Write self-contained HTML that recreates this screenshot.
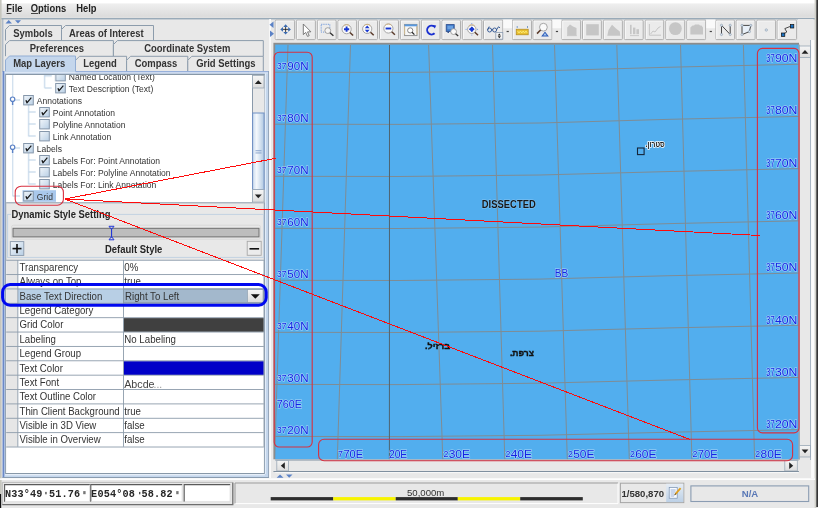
<!DOCTYPE html>
<html><head><meta charset="utf-8"><style>
html,body{margin:0;padding:0;width:818px;height:508px;overflow:hidden;background:#e8e8e8;}
svg{display:block;will-change:transform;}
</style></head><body>
<svg width="818" height="508" viewBox="0 0 818 508">
<rect x="0" y="0" width="818" height="508" fill="#e8e8e8"/>
<defs><linearGradient id="mb" x1="0" y1="0" x2="0" y2="1"><stop offset="0" stop-color="#efefef"/><stop offset="0.25" stop-color="#e9e9e9"/><stop offset="0.6" stop-color="#e2e2e2"/><stop offset="0.85" stop-color="#dcdcdc"/><stop offset="1" stop-color="#e2e2e2"/></linearGradient><linearGradient id="cb" x1="0" y1="0" x2="1" y2="1"><stop offset="0" stop-color="#f2f6fa"/><stop offset="1" stop-color="#b8cfe5"/></linearGradient><linearGradient id="thumb" x1="0" y1="0" x2="1" y2="0"><stop offset="0" stop-color="#c9daee"/><stop offset="0.35" stop-color="#f4f8fc"/><stop offset="1" stop-color="#b0c8e2"/></linearGradient><linearGradient id="btn" x1="0" y1="0" x2="0" y2="1"><stop offset="0" stop-color="#f6f6f6"/><stop offset="1" stop-color="#dcdcdc"/></linearGradient></defs>
<rect x="0" y="0" width="818" height="3.7" fill="#ffffff"/>
<rect x="0" y="3.7" width="818" height="14.6" fill="url(#mb)"/>
<rect x="0" y="18.3" width="815" height="1" fill="#7890a4"/>
<text x="6.3" y="11.9" font-family="Liberation Sans" font-size="10.2" font-weight="bold" fill="#222" transform="matrix(0.92,0,0,1,0.504,0)" >File</text>
<text x="30.7" y="11.9" font-family="Liberation Sans" font-size="10.2" font-weight="bold" fill="#222" transform="matrix(0.92,0,0,1,2.456,0)" >Options</text>
<text x="76.2" y="11.9" font-family="Liberation Sans" font-size="10.2" font-weight="bold" fill="#222" transform="matrix(0.92,0,0,1,6.096,0)" >Help</text>
<rect x="6.5" y="13" width="5" height="0.9" fill="#333"/>
<rect x="31" y="13" width="7" height="0.9" fill="#333"/>
<rect x="0" y="0" width="1.6" height="494" fill="#c6c6be"/>
<rect x="0" y="494" width="1.2" height="14" fill="#111"/>
<path d="M5.5 23.5 L8.7 20 L12 23.5Z" fill="#5b82c6"/>
<path d="M15 20.3 L21 20.3 L18 23.5Z" fill="#5b82c6"/>
<rect x="2.3" y="19" width="1" height="53" fill="#9aaabb"/>
<path d="M5.5 40.5 L5.5 29.5 L9.5 25.5 L61.5 25.5 L61.5 40.5 Z" fill="#e8e8e8"/>
<path d="M5.5 40.5 L5.5 29.5 L9.5 25.5 L61.5 25.5 L61.5 40.5" fill="none" stroke="#8c9cac" stroke-width="1"/>
<text x="13.2" y="36.7" font-family="Liberation Sans" font-size="10.2" font-weight="bold" fill="#333333" transform="matrix(0.93,0,0,1,0.924,0)" >Symbols</text>
<path d="M61.5 40.5 L61.5 29.5 L65.5 25.5 L153.5 25.5 L153.5 40.5 Z" fill="#e8e8e8"/>
<path d="M61.5 40.5 L61.5 29.5 L65.5 25.5 L153.5 25.5 L153.5 40.5" fill="none" stroke="#8c9cac" stroke-width="1"/>
<text x="69.0" y="36.7" font-family="Liberation Sans" font-size="10.2" font-weight="bold" fill="#333333" transform="matrix(0.93,0,0,1,4.830,0)" >Areas of Interest</text>
<path d="M5.5 56.2 L5.5 44.6 L9.5 40.6 L113.4 40.6 L113.4 56.2 Z" fill="#e8e8e8"/>
<path d="M5.5 56.2 L5.5 44.6 L9.5 40.6 L113.4 40.6 L113.4 56.2" fill="none" stroke="#8c9cac" stroke-width="1"/>
<text x="29.8" y="52.1" font-family="Liberation Sans" font-size="10.2" font-weight="bold" fill="#333333" transform="matrix(0.93,0,0,1,2.086,0)" >Preferences</text>
<path d="M113.4 56.2 L113.4 44.6 L117.4 40.6 L263.3 40.6 L263.3 56.2 Z" fill="#e8e8e8"/>
<path d="M113.4 56.2 L113.4 44.6 L117.4 40.6 L263.3 40.6 L263.3 56.2" fill="none" stroke="#8c9cac" stroke-width="1"/>
<text x="144.2" y="52.1" font-family="Liberation Sans" font-size="10.2" font-weight="bold" fill="#333333" transform="matrix(0.93,0,0,1,10.094,0)" >Coordinate System</text>
<path d="M75.5 71.5 L75.5 60.3 L79.5 56.3 L126.6 56.3 L126.6 71.5 Z" fill="#e8e8e8"/>
<path d="M75.5 71.5 L75.5 60.3 L79.5 56.3 L126.6 56.3 L126.6 71.5" fill="none" stroke="#8c9cac" stroke-width="1"/>
<text x="83.2" y="66.9" font-family="Liberation Sans" font-size="10.2" font-weight="bold" fill="#333333" transform="matrix(0.93,0,0,1,5.824,0)" >Legend</text>
<path d="M126.6 71.5 L126.6 60.3 L130.6 56.3 L187.8 56.3 L187.8 71.5 Z" fill="#e8e8e8"/>
<path d="M126.6 71.5 L126.6 60.3 L130.6 56.3 L187.8 56.3 L187.8 71.5" fill="none" stroke="#8c9cac" stroke-width="1"/>
<text x="134.7" y="66.9" font-family="Liberation Sans" font-size="10.2" font-weight="bold" fill="#333333" transform="matrix(0.93,0,0,1,9.429,0)" >Compass</text>
<path d="M187.8 71.5 L187.8 60.3 L191.8 56.3 L263.3 56.3 L263.3 71.5 Z" fill="#e8e8e8"/>
<path d="M187.8 71.5 L187.8 60.3 L191.8 56.3 L263.3 56.3 L263.3 71.5" fill="none" stroke="#8c9cac" stroke-width="1"/>
<text x="196.2" y="66.9" font-family="Liberation Sans" font-size="10.2" font-weight="bold" fill="#333333" transform="matrix(0.93,0,0,1,13.734,0)" >Grid Settings</text>
<path d="M5.5 72 L5.5 60.0 L9.5 56.0 L75.5 56.0 L75.5 72 Z" fill="#c4d6ec"/>
<path d="M5.5 72 L5.5 60.0 L9.5 56.0 L75.5 56.0 L75.5 72" fill="none" stroke="#93aed4" stroke-width="1"/>
<text x="13.2" y="66.9" font-family="Liberation Sans" font-size="10.2" font-weight="bold" fill="#333333" transform="matrix(0.93,0,0,1,0.924,0)" >Map Layers</text>
<rect x="2.6" y="71.2" width="266.4" height="406.8" fill="#c4d6ec"/>
<rect x="4.3" y="72.2" width="263.9" height="1.2" fill="#e2ecf8"/>
<rect x="264.8" y="73.4" width="1.2" height="400.6" fill="#e2ecf8"/>
<rect x="5.2" y="474" width="259.6" height="1.4" fill="#e6eef8"/>
<rect x="75.5" y="71.2" width="193.5" height="1" fill="#8aa6d8"/>
<rect x="2.6" y="71.1" width="1.7" height="406.9" fill="#6a88c8"/>
<rect x="268.2" y="71.2" width="0.9" height="406.8" fill="#8a9cb0"/>
<rect x="2.6" y="477" width="266.5" height="1" fill="#8a9cb0"/>
<rect x="5.2" y="73.8" width="259.6" height="400.2" fill="#8898a8"/>
<rect x="6.2" y="75" width="257.6" height="398" fill="#e8e8e8"/>
<rect x="6.2" y="75" width="246" height="127.5" fill="#ffffff"/>
<rect x="6.2" y="202.3" width="257.6" height="1" fill="#8e9cac"/>
<svg x="5.8" y="75.2" width="246.5" height="127.2" overflow="hidden"><g transform="translate(-5.8,-75.2)">
<rect x="12.1" y="75" width="1" height="121.5" fill="#b8cfe5"/>
<rect x="44.1" y="75" width="1" height="13" fill="#b8cfe5"/>
<rect x="28.1" y="104.5" width="1" height="32" fill="#b8cfe5"/>
<rect x="28.1" y="152.5" width="1" height="32" fill="#b8cfe5"/>
<rect x="44.7" y="75.5" width="7" height="1" fill="#b8cfe5"/>
<rect x="55.7" y="71.5" width="9.6" height="9.4" fill="url(#cb)" stroke="#8597ab" stroke-width="1"/>
<text x="68.8" y="79.9" font-family="Liberation Sans" font-size="9.3" fill="#333333" transform="matrix(0.92,0,0,1,5.504,0)" >Named Location (Text)</text>
<rect x="44.7" y="87.5" width="7" height="1" fill="#b8cfe5"/>
<rect x="55.7" y="83.5" width="9.6" height="9.4" fill="url(#cb)" stroke="#8597ab" stroke-width="1"/>
<path d="M57.300000000000004 88.4 L58.5 87.9 L59.300000000000004 89.5 L62.900000000000006 85.3 L63.800000000000004 86.1 L59.2 91.5 L58.6 91.5 Z" fill="#151515"/>
<text x="68.8" y="91.9" font-family="Liberation Sans" font-size="9.3" fill="#333333" transform="matrix(0.92,0,0,1,5.504,0)" >Text Description (Text)</text>
<rect x="15" y="99.5" width="5" height="1" fill="#b8cfe5"/>
<circle cx="12.6" cy="99.2" r="2.2" fill="#fff" stroke="#5b82c6" stroke-width="1.2"/>
<rect x="11.9" y="101" width="1.4" height="4" fill="#5b82c6"/>
<rect x="23.7" y="95.5" width="9.6" height="9.4" fill="url(#cb)" stroke="#8597ab" stroke-width="1"/>
<path d="M25.3 100.4 L26.5 99.9 L27.299999999999997 101.5 L30.9 97.3 L31.799999999999997 98.1 L27.2 103.5 L26.599999999999998 103.5 Z" fill="#151515"/>
<text x="36.8" y="103.9" font-family="Liberation Sans" font-size="9.3" fill="#333333" transform="matrix(0.92,0,0,1,2.944,0)" >Annotations</text>
<rect x="28.700000000000003" y="111.5" width="7" height="1" fill="#b8cfe5"/>
<rect x="39.7" y="107.5" width="9.6" height="9.4" fill="url(#cb)" stroke="#8597ab" stroke-width="1"/>
<path d="M41.300000000000004 112.4 L42.5 111.9 L43.300000000000004 113.5 L46.900000000000006 109.3 L47.800000000000004 110.1 L43.2 115.5 L42.6 115.5 Z" fill="#151515"/>
<text x="52.800000000000004" y="115.9" font-family="Liberation Sans" font-size="9.3" fill="#333333" transform="matrix(0.92,0,0,1,4.224,0)" >Point Annotation</text>
<rect x="28.700000000000003" y="123.5" width="7" height="1" fill="#b8cfe5"/>
<rect x="39.7" y="119.5" width="9.6" height="9.4" fill="url(#cb)" stroke="#8597ab" stroke-width="1"/>
<text x="52.800000000000004" y="127.9" font-family="Liberation Sans" font-size="9.3" fill="#333333" transform="matrix(0.92,0,0,1,4.224,0)" >Polyline Annotation</text>
<rect x="28.700000000000003" y="135.5" width="7" height="1" fill="#b8cfe5"/>
<rect x="39.7" y="131.5" width="9.6" height="9.4" fill="url(#cb)" stroke="#8597ab" stroke-width="1"/>
<text x="52.800000000000004" y="139.9" font-family="Liberation Sans" font-size="9.3" fill="#333333" transform="matrix(0.92,0,0,1,4.224,0)" >Link Annotation</text>
<rect x="15" y="147.5" width="5" height="1" fill="#b8cfe5"/>
<circle cx="12.6" cy="147.2" r="2.2" fill="#fff" stroke="#5b82c6" stroke-width="1.2"/>
<rect x="11.9" y="149" width="1.4" height="4" fill="#5b82c6"/>
<rect x="23.7" y="143.5" width="9.6" height="9.4" fill="url(#cb)" stroke="#8597ab" stroke-width="1"/>
<path d="M25.3 148.4 L26.5 147.9 L27.299999999999997 149.5 L30.9 145.3 L31.799999999999997 146.1 L27.2 151.5 L26.599999999999998 151.5 Z" fill="#151515"/>
<text x="36.8" y="151.9" font-family="Liberation Sans" font-size="9.3" fill="#333333" transform="matrix(0.92,0,0,1,2.944,0)" >Labels</text>
<rect x="28.700000000000003" y="159.5" width="7" height="1" fill="#b8cfe5"/>
<rect x="39.7" y="155.5" width="9.6" height="9.4" fill="url(#cb)" stroke="#8597ab" stroke-width="1"/>
<path d="M41.300000000000004 160.4 L42.5 159.9 L43.300000000000004 161.5 L46.900000000000006 157.3 L47.800000000000004 158.1 L43.2 163.5 L42.6 163.5 Z" fill="#151515"/>
<text x="52.800000000000004" y="163.9" font-family="Liberation Sans" font-size="9.3" fill="#333333" transform="matrix(0.92,0,0,1,4.224,0)" >Labels For: Point Annotation</text>
<rect x="28.700000000000003" y="171.5" width="7" height="1" fill="#b8cfe5"/>
<rect x="39.7" y="167.5" width="9.6" height="9.4" fill="url(#cb)" stroke="#8597ab" stroke-width="1"/>
<text x="52.800000000000004" y="175.9" font-family="Liberation Sans" font-size="9.3" fill="#333333" transform="matrix(0.92,0,0,1,4.224,0)" >Labels For: Polyline Annotation</text>
<rect x="28.700000000000003" y="183.5" width="7" height="1" fill="#b8cfe5"/>
<rect x="39.7" y="179.5" width="9.6" height="9.4" fill="url(#cb)" stroke="#8597ab" stroke-width="1"/>
<text x="52.800000000000004" y="187.9" font-family="Liberation Sans" font-size="9.3" fill="#333333" transform="matrix(0.92,0,0,1,4.224,0)" >Labels For: Link Annotation</text>
<rect x="22.5" y="190.2" width="33.5" height="11.6" fill="#a9c8ec"/>
<rect x="13" y="195.5" width="7" height="1" fill="#b8cfe5"/>
<rect x="23.7" y="191.5" width="9.6" height="9.4" fill="url(#cb)" stroke="#8597ab" stroke-width="1"/>
<path d="M25.3 196.4 L26.5 195.9 L27.299999999999997 197.5 L30.9 193.3 L31.799999999999997 194.1 L27.2 199.5 L26.599999999999998 199.5 Z" fill="#151515"/>
<text x="36.8" y="199.9" font-family="Liberation Sans" font-size="9.3" fill="#333333" transform="matrix(0.92,0,0,1,2.944,0)" >Grid</text>
</g></svg>
<rect x="252" y="75.2" width="12.5" height="127.2" fill="#e8e8e8"/>
<rect x="252" y="75.2" width="0.9" height="127.2" fill="#7f90a3"/>
<rect x="252.5" y="75.5" width="11.5" height="12.5" fill="url(#btn)" stroke="#9aa8b6" stroke-width="0.8"/>
<path d="M254.8 84 L258.3 80.3 L261.8 84Z" fill="#222"/>
<rect x="252.6" y="113" width="11.5" height="76.5" fill="url(#thumb)" stroke="#6f8fc4" stroke-width="1"/>
<rect x="255.5" y="150.3" width="6" height="0.9" fill="#7f9cc8"/><rect x="255.5" y="152.5" width="6" height="0.9" fill="#7f9cc8"/>
<rect x="252.5" y="189.6" width="11.5" height="12.5" fill="url(#btn)" stroke="#9aa8b6" stroke-width="0.8"/>
<path d="M254.8 194.5 L258.3 198.2 L261.8 194.5Z" fill="#222"/>
<rect x="7.6" y="214.4" width="256" height="43" fill="none" stroke="#c2d2e2" stroke-width="1"/>
<rect x="11" y="209" width="101" height="10" fill="#e8e8e8"/>
<text x="11.5" y="217.9" font-family="Liberation Sans" font-size="10.2" font-weight="bold" fill="#262626" transform="matrix(0.925,0,0,1,0.862,0)" >Dynamic Style Setting</text>
<rect x="11.5" y="225.2" width="249" height="14" rx="2" fill="#e8e8e8" stroke="#d6d6d6" stroke-width="0.8"/>
<rect x="13" y="228.3" width="246" height="8.6" fill="#bdbdbd" stroke="#6e6e6e" stroke-width="1"/>
<path d="M109 226.3 L114 226.3 L111.5 229.5Z M109 239.8 L114 239.8 L111.5 236.6Z" fill="none" stroke="#2238d6" stroke-width="1"/>
<rect x="111" y="228.5" width="1.1" height="9" fill="#2238d6"/>
<rect x="10.3" y="241.6" width="13.5" height="13.8" fill="url(#cb)" stroke="#8a9aac" stroke-width="0.9"/>
<rect x="12.5" y="247.8" width="9" height="1.6" fill="#111"/><rect x="16.2" y="244" width="1.6" height="9.2" fill="#111"/>
<text x="105.0" y="252.9" font-family="Liberation Sans" font-size="10.2" font-weight="bold" fill="#262626" transform="matrix(0.93,0,0,1,7.350,0)" >Default Style</text>
<rect x="247.2" y="241.3" width="14" height="14" fill="#ececec" stroke="#a8a8a8" stroke-width="0.9"/>
<rect x="249.5" y="248" width="9.6" height="1.6" fill="#111"/>
<rect x="6.2" y="260.0" width="257.6" height="213.0" fill="#ffffff"/>
<rect x="6.2" y="260.0" width="11.6" height="186.81" fill="#e6e6e6"/>
<rect x="6.2" y="259.8" width="257.6" height="0.9" fill="#8d9cab"/>
<text x="124.3" y="271.0" font-family="Liberation Sans" font-size="10.1" fill="#333333" transform="matrix(0.96,0,0,1,4.972,0)" >0%</text>
<text x="19.5" y="271.0" font-family="Liberation Sans" font-size="10.1" fill="#333333" transform="matrix(0.955,0,0,1,0.878,0)" >Transparency</text>
<text x="124.3" y="285.37" font-family="Liberation Sans" font-size="10.1" fill="#333333" transform="matrix(0.96,0,0,1,4.972,0)" >true</text>
<text x="19.5" y="285.37" font-family="Liberation Sans" font-size="10.1" fill="#333333" transform="matrix(0.955,0,0,1,0.878,0)" >Always on Top</text>
<rect x="18" y="288.74" width="105.5" height="14.37" fill="#b8cfe5"/>
<rect x="123.5" y="288.94" width="140" height="13.969999999999999" fill="#a3b8cc" stroke="#7a8a99" stroke-width="0.8"/>
<rect x="247.5" y="289.54" width="15.5" height="12.77" fill="url(#btn)" stroke="#8899aa" stroke-width="0.6"/>
<path d="M250.8 294.34000000000003 L259.8 294.34000000000003 L255.3 298.74Z" fill="#111"/>
<text x="125" y="299.74" font-family="Liberation Sans" font-size="10.1" fill="#333333" transform="matrix(0.96,0,0,1,5.000,0)" >Right To Left</text>
<text x="19.5" y="299.74" font-family="Liberation Sans" font-size="10.1" fill="#333333" transform="matrix(0.955,0,0,1,0.878,0)" >Base Text Direction</text>
<text x="19.5" y="314.11" font-family="Liberation Sans" font-size="10.1" fill="#333333" transform="matrix(0.955,0,0,1,0.878,0)" >Legend Category</text>
<rect x="123.8" y="318.08000000000004" width="140" height="13.77" fill="#404040"/>
<text x="19.5" y="328.48" font-family="Liberation Sans" font-size="10.1" fill="#333333" transform="matrix(0.955,0,0,1,0.878,0)" >Grid Color</text>
<text x="124.3" y="342.85" font-family="Liberation Sans" font-size="10.1" fill="#333333" transform="matrix(0.96,0,0,1,4.972,0)" >No Labeling</text>
<text x="19.5" y="342.85" font-family="Liberation Sans" font-size="10.1" fill="#333333" transform="matrix(0.955,0,0,1,0.878,0)" >Labeling</text>
<text x="19.5" y="357.22" font-family="Liberation Sans" font-size="10.1" fill="#333333" transform="matrix(0.955,0,0,1,0.878,0)" >Legend Group</text>
<rect x="123.8" y="361.19" width="140" height="13.77" fill="#0000c8"/>
<text x="19.5" y="371.59" font-family="Liberation Sans" font-size="10.1" fill="#333333" transform="matrix(0.955,0,0,1,0.878,0)" >Text Color</text>
<text x="124.2" y="388.35999999999996" font-family="Liberation Sans" font-size="11.4" fill="#444" transform="matrix(0.94,0,0,1,7.452,0)" >Abcde</text>
<text x="153.6" y="388.35999999999996" font-family="Liberation Sans" font-size="11" fill="#9a9a9a" transform="matrix(0.94,0,0,1,9.216,0)" >...</text>
<text x="19.5" y="385.96" font-family="Liberation Sans" font-size="10.1" fill="#333333" transform="matrix(0.955,0,0,1,0.878,0)" >Text Font</text>
<text x="19.5" y="400.33" font-family="Liberation Sans" font-size="10.1" fill="#333333" transform="matrix(0.955,0,0,1,0.878,0)" >Text Outline Color</text>
<text x="124.3" y="414.7" font-family="Liberation Sans" font-size="10.1" fill="#333333" transform="matrix(0.96,0,0,1,4.972,0)" >true</text>
<text x="19.5" y="414.7" font-family="Liberation Sans" font-size="10.1" fill="#333333" transform="matrix(0.955,0,0,1,0.878,0)" >Thin Client Background</text>
<text x="124.3" y="429.07" font-family="Liberation Sans" font-size="10.1" fill="#333333" transform="matrix(0.96,0,0,1,4.972,0)" >false</text>
<text x="19.5" y="429.07" font-family="Liberation Sans" font-size="10.1" fill="#333333" transform="matrix(0.955,0,0,1,0.878,0)" >Visible in 3D View</text>
<text x="124.3" y="443.44" font-family="Liberation Sans" font-size="10.1" fill="#333333" transform="matrix(0.96,0,0,1,4.972,0)" >false</text>
<text x="19.5" y="443.44" font-family="Liberation Sans" font-size="10.1" fill="#333333" transform="matrix(0.955,0,0,1,0.878,0)" >Visible in Overview</text>
<rect x="6.2" y="274.12" width="257.6" height="0.9" fill="#8d9cab"/>
<rect x="6.2" y="288.49" width="257.6" height="0.9" fill="#8d9cab"/>
<rect x="6.2" y="302.86" width="257.6" height="0.9" fill="#8d9cab"/>
<rect x="6.2" y="317.23" width="257.6" height="0.9" fill="#8d9cab"/>
<rect x="6.2" y="331.6" width="257.6" height="0.9" fill="#8d9cab"/>
<rect x="6.2" y="345.97" width="257.6" height="0.9" fill="#8d9cab"/>
<rect x="6.2" y="360.34" width="257.6" height="0.9" fill="#8d9cab"/>
<rect x="6.2" y="374.71" width="257.6" height="0.9" fill="#8d9cab"/>
<rect x="6.2" y="389.08" width="257.6" height="0.9" fill="#8d9cab"/>
<rect x="6.2" y="403.45" width="257.6" height="0.9" fill="#8d9cab"/>
<rect x="6.2" y="417.82" width="257.6" height="0.9" fill="#8d9cab"/>
<rect x="6.2" y="432.19" width="257.6" height="0.9" fill="#8d9cab"/>
<rect x="6.2" y="446.56" width="257.6" height="0.9" fill="#8d9cab"/>
<rect x="17.4" y="260.0" width="0.9" height="186.81" fill="#8d9cab"/>
<rect x="123" y="260.0" width="0.9" height="186.81" fill="#8d9cab"/>
<rect x="263.6" y="260.0" width="0.9" height="186.81" fill="#8d9cab"/>
<rect x="2.6" y="284.6" width="263.6" height="20.6" rx="7.5" fill="none" stroke="#0008f0" stroke-width="3"/>
<rect x="269.2" y="19" width="1.8" height="459" fill="#fafafa"/>
<path d="M273.5 21.5 L269.5 24.8 L273.5 28Z" fill="#5b82c6"/>
<path d="M270 30.5 L274 33.8 L270 37Z" fill="#5b82c6"/>
<rect x="275.2" y="20.2" width="19.400000000000034" height="19.4" rx="1" fill="#ebebeb" stroke="#a9a9a9" stroke-width="0.9"/>
<path d="M276.2 39 L276.2 21 L293.6 21" fill="none" stroke="#fbfbfb" stroke-width="0.8"/>
<rect x="296.4" y="20.2" width="19.0" height="19.4" rx="1" fill="#ebebeb" stroke="#a9a9a9" stroke-width="0.9"/>
<path d="M297.4 39 L297.4 21 L314.4 21" fill="none" stroke="#fbfbfb" stroke-width="0.8"/>
<rect x="317.4" y="20.2" width="18.80000000000001" height="19.4" rx="1" fill="#ebebeb" stroke="#a9a9a9" stroke-width="0.9"/>
<path d="M318.4 39 L318.4 21 L335.2 21" fill="none" stroke="#fbfbfb" stroke-width="0.8"/>
<rect x="338" y="20.2" width="18.600000000000023" height="19.4" rx="1" fill="#ebebeb" stroke="#a9a9a9" stroke-width="0.9"/>
<path d="M339 39 L339 21 L355.6 21" fill="none" stroke="#fbfbfb" stroke-width="0.8"/>
<rect x="358.6" y="20.2" width="18.899999999999977" height="19.4" rx="1" fill="#ebebeb" stroke="#a9a9a9" stroke-width="0.9"/>
<path d="M359.6 39 L359.6 21 L376.5 21" fill="none" stroke="#fbfbfb" stroke-width="0.8"/>
<rect x="379.5" y="20.2" width="19.0" height="19.4" rx="1" fill="#ebebeb" stroke="#a9a9a9" stroke-width="0.9"/>
<path d="M380.5 39 L380.5 21 L397.5 21" fill="none" stroke="#fbfbfb" stroke-width="0.8"/>
<rect x="400.4" y="20.2" width="19.0" height="19.4" rx="1" fill="#ebebeb" stroke="#a9a9a9" stroke-width="0.9"/>
<path d="M401.4 39 L401.4 21 L418.4 21" fill="none" stroke="#fbfbfb" stroke-width="0.8"/>
<rect x="421.4" y="20.2" width="18.600000000000023" height="19.4" rx="1" fill="#ebebeb" stroke="#a9a9a9" stroke-width="0.9"/>
<path d="M422.4 39 L422.4 21 L439 21" fill="none" stroke="#fbfbfb" stroke-width="0.8"/>
<rect x="442" y="20.2" width="18.5" height="19.4" rx="1" fill="#ebebeb" stroke="#a9a9a9" stroke-width="0.9"/>
<path d="M443 39 L443 21 L459.5 21" fill="none" stroke="#fbfbfb" stroke-width="0.8"/>
<rect x="462.4" y="20.2" width="19.400000000000034" height="19.4" rx="1" fill="#ebebeb" stroke="#a9a9a9" stroke-width="0.9"/>
<path d="M463.4 39 L463.4 21 L480.8 21" fill="none" stroke="#fbfbfb" stroke-width="0.8"/>
<rect x="483.5" y="20.2" width="19.30000000000001" height="19.4" rx="1" fill="#ebebeb" stroke="#a9a9a9" stroke-width="0.9"/>
<path d="M484.5 39 L484.5 21 L501.8 21" fill="none" stroke="#fbfbfb" stroke-width="0.8"/>
<rect x="512.3" y="20.2" width="19.200000000000045" height="19.4" rx="1" fill="#ebebeb" stroke="#a9a9a9" stroke-width="0.9"/>
<path d="M513.3 39 L513.3 21 L530.5 21" fill="none" stroke="#fbfbfb" stroke-width="0.8"/>
<rect x="533.1" y="20.2" width="18.899999999999977" height="19.4" rx="1" fill="#ebebeb" stroke="#a9a9a9" stroke-width="0.9"/>
<path d="M534.1 39 L534.1 21 L551 21" fill="none" stroke="#fbfbfb" stroke-width="0.8"/>
<rect x="561.7" y="20.2" width="18.899999999999977" height="19.4" rx="1" fill="#ebebeb" stroke="#a9a9a9" stroke-width="0.9"/>
<path d="M562.7 39 L562.7 21 L579.6 21" fill="none" stroke="#fbfbfb" stroke-width="0.8"/>
<rect x="582.5" y="20.2" width="18.899999999999977" height="19.4" rx="1" fill="#ebebeb" stroke="#a9a9a9" stroke-width="0.9"/>
<path d="M583.5 39 L583.5 21 L600.4 21" fill="none" stroke="#fbfbfb" stroke-width="0.8"/>
<rect x="603.4" y="20.2" width="19.0" height="19.4" rx="1" fill="#ebebeb" stroke="#a9a9a9" stroke-width="0.9"/>
<path d="M604.4 39 L604.4 21 L621.4 21" fill="none" stroke="#fbfbfb" stroke-width="0.8"/>
<rect x="624.3" y="20.2" width="18.90000000000009" height="19.4" rx="1" fill="#ebebeb" stroke="#a9a9a9" stroke-width="0.9"/>
<path d="M625.3 39 L625.3 21 L642.2 21" fill="none" stroke="#fbfbfb" stroke-width="0.8"/>
<rect x="645.3" y="20.2" width="18.40000000000009" height="19.4" rx="1" fill="#ebebeb" stroke="#a9a9a9" stroke-width="0.9"/>
<path d="M646.3 39 L646.3 21 L662.7 21" fill="none" stroke="#fbfbfb" stroke-width="0.8"/>
<rect x="665.8" y="20.2" width="18.90000000000009" height="19.4" rx="1" fill="#ebebeb" stroke="#a9a9a9" stroke-width="0.9"/>
<path d="M666.8 39 L666.8 21 L683.7 21" fill="none" stroke="#fbfbfb" stroke-width="0.8"/>
<rect x="686.8" y="20.2" width="18.90000000000009" height="19.4" rx="1" fill="#ebebeb" stroke="#a9a9a9" stroke-width="0.9"/>
<path d="M687.8 39 L687.8 21 L704.7 21" fill="none" stroke="#fbfbfb" stroke-width="0.8"/>
<rect x="715.7" y="20.2" width="18.899999999999977" height="19.4" rx="1" fill="#ebebeb" stroke="#a9a9a9" stroke-width="0.9"/>
<path d="M716.7 39 L716.7 21 L733.6 21" fill="none" stroke="#fbfbfb" stroke-width="0.8"/>
<rect x="736.2" y="20.2" width="18.899999999999977" height="19.4" rx="1" fill="#ebebeb" stroke="#a9a9a9" stroke-width="0.9"/>
<path d="M737.2 39 L737.2 21 L754.1 21" fill="none" stroke="#fbfbfb" stroke-width="0.8"/>
<rect x="756.7" y="20.2" width="18.899999999999977" height="19.4" rx="1" fill="#ebebeb" stroke="#a9a9a9" stroke-width="0.9"/>
<path d="M757.7 39 L757.7 21 L774.6 21" fill="none" stroke="#fbfbfb" stroke-width="0.8"/>
<rect x="777.2" y="20.2" width="19.399999999999977" height="19.4" rx="1" fill="#ebebeb" stroke="#a9a9a9" stroke-width="0.9"/>
<path d="M778.2 39 L778.2 21 L795.6 21" fill="none" stroke="#fbfbfb" stroke-width="0.8"/>
<rect x="503.2" y="19.5" width="8.800000000000011" height="9" fill="#fafafa"/>
<rect x="503.2" y="28.5" width="8.800000000000011" height="11" fill="#e9e9e9"/>
<rect x="506.6" y="30.9" width="2.2" height="1.2" fill="#444"/>
<rect x="552.4" y="19.5" width="8.899999999999977" height="9" fill="#fafafa"/>
<rect x="552.4" y="28.5" width="8.899999999999977" height="11" fill="#e9e9e9"/>
<rect x="555.8499999999999" y="30.9" width="2.2" height="1.2" fill="#444"/>
<rect x="706.1" y="19.5" width="9.199999999999932" height="9" fill="#fafafa"/>
<rect x="706.1" y="28.5" width="9.199999999999932" height="11" fill="#e9e9e9"/>
<rect x="709.7" y="30.9" width="2.2" height="1.2" fill="#444"/>
<rect x="798" y="19" width="15.5" height="21" fill="#e9e9e9"/>
<path d="M281.8 29.4 H289.4 M285.6 25.6 V33.2" stroke="#1a1a1a" stroke-width="0.8"/>
<g fill="#3a6ab0"><path d="M285.6 24.2 L287.9 26.9 L283.3 26.9Z M285.6 34.6 L287.9 31.9 L283.3 31.9Z M280.3 29.4 L283 27.1 L283 31.7Z M290.9 29.4 L288.2 27.1 L288.2 31.7Z"/></g>
<path d="M303.3 24 L303.3 34.6 L305.7 32.4 L307.5 36.4 L309.2 35.7 L307.5 31.9 L310.9 31.8 Z" fill="#fff" stroke="#6e6e6e" stroke-width="0.9" stroke-linejoin="round"/>
<rect x="321.2" y="24.3" width="8.6" height="7.8" fill="none" stroke="#5a8ad8" stroke-width="0.9" stroke-dasharray="1.1 1.1"/>
<circle cx="327.8" cy="30.6" r="2.9" fill="#f4f4f4" stroke="#9a9a9a" stroke-width="0.9"/>
<path d="M330 32.8 L333.4 35.8" stroke="#333" stroke-width="1.4"/>
<circle cx="346.6" cy="29.2" r="4.6" fill="#fafafa" stroke="#a6a6a6" stroke-width="1"/>
<path d="M343.40000000000003 26.0 A4.6 4.6 0 0 1 349.8 26.0" fill="none" stroke="#d8b070" stroke-width="0.7"/>
<path d="M349.91200000000003 32.512 L353.112 35.512" stroke="#5a3a2a" stroke-width="1.5"/>
<path d="M344 29.2 H349.2 M346.6 26.6 V31.8" stroke="#1838d0" stroke-width="1.9"/>
<circle cx="367.2" cy="28.9" r="4.6" fill="#fafafa" stroke="#a6a6a6" stroke-width="1"/>
<path d="M364.0 25.7 A4.6 4.6 0 0 1 370.4 25.7" fill="none" stroke="#d8b070" stroke-width="0.7"/>
<path d="M370.512 32.211999999999996 L373.712 35.211999999999996" stroke="#5a3a2a" stroke-width="1.5"/>
<path d="M367.2 25.4 L369.6 28.3 L364.8 28.3Z M367.2 32.6 L369.6 29.7 L364.8 29.7Z" fill="#1838d0"/>
<circle cx="388.4" cy="28.5" r="4.6" fill="#fafafa" stroke="#a6a6a6" stroke-width="1"/>
<path d="M385.2 25.3 A4.6 4.6 0 0 1 391.59999999999997 25.3" fill="none" stroke="#d8b070" stroke-width="0.7"/>
<path d="M391.712 31.812 L394.912 34.812" stroke="#5a3a2a" stroke-width="1.5"/>
<path d="M385.6 28.5 H391.2" stroke="#1838d0" stroke-width="1.9"/>
<rect x="404.6" y="24.4" width="12.4" height="11.2" fill="#f6f6f6" stroke="#8a8a8a" stroke-width="0.9"/>
<rect x="404.6" y="24.4" width="12.4" height="1.9" fill="#5a9ae0"/>
<rect x="404.2" y="26.3" width="0.9" height="8" fill="#d8c090"/><rect x="416.6" y="26.3" width="0.9" height="8" fill="#d8c090"/>
<circle cx="410.2" cy="30.4" r="2.6" fill="#fff" stroke="#777" stroke-width="0.9"/>
<path d="M412 32.3 L414.4 34.6" stroke="#222" stroke-width="1.2"/>
<path d="M434.3 26.6 A4.4 4.4 0 1 0 434.6 33.2" fill="none" stroke="#1a30d0" stroke-width="1.9"/>
<path d="M432.2 25 L436.2 25.4 L434.8 28.6Z" fill="#1a30d0"/>
<rect x="446.2" y="24.6" width="8" height="6.8" fill="#3c78c8" stroke="#2a4a8a" stroke-width="0.8"/>
<rect x="447.4" y="25.8" width="5.6" height="3.5" fill="#6aa0e0"/>
<rect x="447.5" y="31.4" width="1.4" height="1.6" fill="#2a4a8a"/>
<circle cx="453.6" cy="31.6" r="2.9" fill="#fafafa" stroke="#999" stroke-width="0.9"/>
<path d="M455.6 33.7 L458.2 36" stroke="#333" stroke-width="1.3"/>
<circle cx="471.8" cy="29.3" r="4.2" fill="#fafafa" stroke="#a6a6a6" stroke-width="1"/>
<path d="M468.6 26.1 A4.2 4.2 0 0 1 475.0 26.1" fill="none" stroke="#d8b070" stroke-width="0.7"/>
<path d="M474.824 32.324 L478.024 35.324" stroke="#5a3a2a" stroke-width="1.5"/>
<path d="M471.8 26.6 L474.5 29.3 L471.8 32 L469.1 29.3Z" fill="#1838d0"/><path d="M469.5 29.3 H474.1 M471.8 27 V31.6" stroke="#1838d0" stroke-width="1.6"/>
<g fill="#7aa0e8"><circle cx="471.8" cy="23.6" r="0.6"/><circle cx="471.8" cy="35" r="0.6"/><circle cx="466.1" cy="29.3" r="0.6"/><circle cx="477.5" cy="29.3" r="0.6"/></g>
<g fill="none" stroke="#2a5090" stroke-width="0.9"><circle cx="489.6" cy="30" r="2"/><circle cx="494.6" cy="30" r="2"/><path d="M491.6 29.6 H492.6 M487.6 29.8 L489.2 26.5 M496.6 29.8 L498.4 26.8 L500 27.8"/></g>
<rect x="495.8" y="32.6" width="7" height="6.6" fill="#f2f2f2" stroke="#8a9ab0" stroke-width="0.8"/>
<path d="M499.3 33.5 L500.9 35.6 L497.7 35.6Z M499.3 38.3 L500.9 36.2 L497.7 36.2Z" fill="#222"/>
<rect x="516.2" y="29.2" width="12" height="5.6" fill="#e8c030" stroke="#b08820" stroke-width="0.7"/>
<path d="M517.6 31 L519 33 L520.4 31 L521.8 33 L523.2 31 L524.6 33 L526 31 L527.2 33" fill="none" stroke="#fff080" stroke-width="0.8"/>
<rect x="516.7" y="26.3" width="1" height="1.4" fill="#4a7ac0"/><rect x="527" y="26.3" width="1" height="1.4" fill="#4a7ac0"/>
<circle cx="543.4" cy="27.2" r="3.9" fill="#fafafa" stroke="#a6a6a6" stroke-width="1"/>
<path d="M540.6 30 L537 33.6" stroke="#5a3a2a" stroke-width="1.5"/>
<path d="M545 31.4 L548.8 36.6 L541.2 36.6Z" fill="#2a5ab8"/><path d="M545 33 L546.8 35.6 L543.2 35.6Z" fill="#a8c8f0"/>
<path d="M567.2 35 L567.2 27.5 L570 24.5 L573 26.5 L576.5 28 L576.5 35Z" fill="#c6c6c6"/><rect x="567" y="35.3" width="9.8" height="0.8" fill="#bdbdbd"/>
<rect x="586.2" y="24.2" width="12.6" height="11.2" fill="#c6c6c6"/>
<path d="M607.3 35.8 L608.5 30 L612 24.8 L616 28.5 L619.8 31.5 L620.3 35.8Z" fill="#c6c6c6"/>
<g fill="#c6c6c6"><rect x="630" y="24.8" width="1.6" height="9.4"/><rect x="633" y="27.6" width="2.4" height="6.6"/><rect x="636.4" y="29.2" width="2.6" height="5"/><rect x="630" y="35.2" width="9" height="0.9"/></g>
<g fill="none" stroke="#bcbcbc" stroke-width="0.8"><path d="M649.4 24 V35.2 H661"/><path d="M650.6 34 L653 31 L655 32 L658 28 L660.5 26.5"/></g>
<circle cx="675.4" cy="28.6" r="6.4" fill="#c6c6c6"/>
<path d="M690.4 34.5 V27.5 L692.5 25.6 H694 L695 24.6 H699 L700 25.6 H701.5 L703 27.5 V34.5Z" fill="#c6c6c6"/>
<path d="M721.5 34.5 V25.3 L730.2 34.5 V25.3" fill="none" stroke="#333" stroke-width="0.9"/>
<circle cx="721.5" cy="25.3" r="1.1" fill="#d6e2ee" stroke="#8a9aac" stroke-width="0.6"/>
<circle cx="721.5" cy="34.5" r="1.1" fill="#d6e2ee" stroke="#8a9aac" stroke-width="0.6"/>
<circle cx="730.2" cy="34.5" r="1.1" fill="#d6e2ee" stroke="#8a9aac" stroke-width="0.6"/>
<circle cx="730.2" cy="25.3" r="1.1" fill="#d6e2ee" stroke="#8a9aac" stroke-width="0.6"/>
<path d="M742 25.4 L750.8 25.4 L749.4 31.6 L742 34.6Z" fill="#e8f0f8" stroke="#333" stroke-width="0.9"/>
<circle cx="742" cy="25.4" r="1.1" fill="#d6e2ee" stroke="#8a9aac" stroke-width="0.6"/>
<circle cx="750.8" cy="25.4" r="1.1" fill="#d6e2ee" stroke="#8a9aac" stroke-width="0.6"/>
<circle cx="749.4" cy="31.6" r="1.1" fill="#d6e2ee" stroke="#8a9aac" stroke-width="0.6"/>
<circle cx="742" cy="34.6" r="1.1" fill="#d6e2ee" stroke="#8a9aac" stroke-width="0.6"/>
<circle cx="766.3" cy="30" r="1.2" fill="#d6e2ee" stroke="#8a9aac" stroke-width="0.6"/>
<path d="M783.8 33.8 L786.8 32 L784.8 28.6 L790.8 26.2" fill="none" stroke="#222" stroke-width="0.8"/>
<rect x="781.4" y="33" width="3.4" height="3.4" fill="#1a70c0" stroke="#111" stroke-width="0.7"/>
<rect x="790.4" y="24.6" width="3.4" height="3.4" fill="#1a70c0" stroke="#111" stroke-width="0.7"/>
<rect x="273.4" y="42.8" width="525.6" height="416.5" fill="#8c8c8c"/>
<rect x="275.2" y="44.6" width="523.4000000000001" height="414.7" fill="#52aeee"/>
<svg x="275.2" y="44.6" width="523.4000000000001" height="414.7" overflow="hidden"><g transform="translate(-275.2,-44.6)">
<polyline points="270,72.2 400,72.4 540,70.9 670,67.2 800,64.2" fill="none" stroke="#7f8c94" stroke-width="1"/>
<polyline points="270,124.2 400,124.4 540,123.0 670,119.3 800,116.4" fill="none" stroke="#7f8c94" stroke-width="1"/>
<polyline points="270,176.3 400,176.5 540,175.0 670,171.5 800,168.6" fill="none" stroke="#7f8c94" stroke-width="1"/>
<polyline points="270,228.3 400,228.5 540,227.1 670,223.6 800,220.8" fill="none" stroke="#7f8c94" stroke-width="1"/>
<polyline points="270,280.3 400,280.5 540,279.1 670,275.7 800,273.0" fill="none" stroke="#7f8c94" stroke-width="1"/>
<polyline points="270,332.3 400,332.5 540,331.2 670,327.9 800,325.2" fill="none" stroke="#7f8c94" stroke-width="1"/>
<polyline points="270,384.4 400,384.6 540,383.2 670,380.0 800,377.4" fill="none" stroke="#7f8c94" stroke-width="1"/>
<polyline points="270,436.4 400,436.6 540,435.3 670,432.2 800,429.6" fill="none" stroke="#7f8c94" stroke-width="1"/>
<line x1="288" y1="44.6" x2="274.5" y2="459.3" stroke="#7f8c94" stroke-width="1"/>
<line x1="350.5" y1="44.6" x2="337.3" y2="459.3" stroke="#7f8c94" stroke-width="1"/>
<line x1="428.6" y1="44.6" x2="442.8" y2="459.3" stroke="#7f8c94" stroke-width="1"/>
<line x1="492.5" y1="44.6" x2="504.8" y2="459.3" stroke="#7f8c94" stroke-width="1"/>
<line x1="554.5" y1="44.6" x2="567.3" y2="459.3" stroke="#7f8c94" stroke-width="1"/>
<line x1="616.8" y1="44.6" x2="629.3" y2="459.3" stroke="#7f8c94" stroke-width="1"/>
<line x1="680.5" y1="44.6" x2="691.9" y2="459.3" stroke="#7f8c94" stroke-width="1"/>
<line x1="743.4" y1="44.6" x2="754.6" y2="459.3" stroke="#7f8c94" stroke-width="1"/>
<line x1="389.5" y1="44.6" x2="389.4" y2="459.3" stroke="#4f6470" stroke-width="1"/>
<text x="277.0" y="69.2" font-family="Liberation Sans" font-size="9.0" textLength="9.3" fill="#1424e4" stroke="#e6f2ff" stroke-width="1.1" stroke-opacity="0.6" paint-order="stroke" lengthAdjust="spacingAndGlyphs">37</text>
<text x="287.3" y="70.10000000000001" font-family="Liberation Sans" font-size="10.6" textLength="21.2" fill="#1424e4" stroke="#e6f2ff" stroke-width="1.1" stroke-opacity="0.6" paint-order="stroke" lengthAdjust="spacingAndGlyphs">90N</text>
<text x="277.0" y="121.13" font-family="Liberation Sans" font-size="9.0" textLength="9.3" fill="#1424e4" stroke="#e6f2ff" stroke-width="1.1" stroke-opacity="0.6" paint-order="stroke" lengthAdjust="spacingAndGlyphs">37</text>
<text x="287.3" y="122.03" font-family="Liberation Sans" font-size="10.6" textLength="21.2" fill="#1424e4" stroke="#e6f2ff" stroke-width="1.1" stroke-opacity="0.6" paint-order="stroke" lengthAdjust="spacingAndGlyphs">80N</text>
<text x="277.0" y="173.06" font-family="Liberation Sans" font-size="9.0" textLength="9.3" fill="#1424e4" stroke="#e6f2ff" stroke-width="1.1" stroke-opacity="0.6" paint-order="stroke" lengthAdjust="spacingAndGlyphs">37</text>
<text x="287.3" y="173.96" font-family="Liberation Sans" font-size="10.6" textLength="21.2" fill="#1424e4" stroke="#e6f2ff" stroke-width="1.1" stroke-opacity="0.6" paint-order="stroke" lengthAdjust="spacingAndGlyphs">70N</text>
<text x="277.0" y="224.99" font-family="Liberation Sans" font-size="9.0" textLength="9.3" fill="#1424e4" stroke="#e6f2ff" stroke-width="1.1" stroke-opacity="0.6" paint-order="stroke" lengthAdjust="spacingAndGlyphs">37</text>
<text x="287.3" y="225.89000000000001" font-family="Liberation Sans" font-size="10.6" textLength="21.2" fill="#1424e4" stroke="#e6f2ff" stroke-width="1.1" stroke-opacity="0.6" paint-order="stroke" lengthAdjust="spacingAndGlyphs">60N</text>
<text x="277.0" y="276.92" font-family="Liberation Sans" font-size="9.0" textLength="9.3" fill="#1424e4" stroke="#e6f2ff" stroke-width="1.1" stroke-opacity="0.6" paint-order="stroke" lengthAdjust="spacingAndGlyphs">37</text>
<text x="287.3" y="277.82" font-family="Liberation Sans" font-size="10.6" textLength="21.2" fill="#1424e4" stroke="#e6f2ff" stroke-width="1.1" stroke-opacity="0.6" paint-order="stroke" lengthAdjust="spacingAndGlyphs">50N</text>
<text x="277.0" y="328.84999999999997" font-family="Liberation Sans" font-size="9.0" textLength="9.3" fill="#1424e4" stroke="#e6f2ff" stroke-width="1.1" stroke-opacity="0.6" paint-order="stroke" lengthAdjust="spacingAndGlyphs">37</text>
<text x="287.3" y="329.74999999999994" font-family="Liberation Sans" font-size="10.6" textLength="21.2" fill="#1424e4" stroke="#e6f2ff" stroke-width="1.1" stroke-opacity="0.6" paint-order="stroke" lengthAdjust="spacingAndGlyphs">40N</text>
<text x="277.0" y="380.78" font-family="Liberation Sans" font-size="9.0" textLength="9.3" fill="#1424e4" stroke="#e6f2ff" stroke-width="1.1" stroke-opacity="0.6" paint-order="stroke" lengthAdjust="spacingAndGlyphs">37</text>
<text x="287.3" y="381.67999999999995" font-family="Liberation Sans" font-size="10.6" textLength="21.2" fill="#1424e4" stroke="#e6f2ff" stroke-width="1.1" stroke-opacity="0.6" paint-order="stroke" lengthAdjust="spacingAndGlyphs">30N</text>
<text x="277.0" y="432.71" font-family="Liberation Sans" font-size="9.0" textLength="9.3" fill="#1424e4" stroke="#e6f2ff" stroke-width="1.1" stroke-opacity="0.6" paint-order="stroke" lengthAdjust="spacingAndGlyphs">37</text>
<text x="287.3" y="433.60999999999996" font-family="Liberation Sans" font-size="10.6" textLength="21.2" fill="#1424e4" stroke="#e6f2ff" stroke-width="1.1" stroke-opacity="0.6" paint-order="stroke" lengthAdjust="spacingAndGlyphs">20N</text>
<text x="276.8" y="408" font-family="Liberation Sans" font-size="10.2" textLength="25" fill="#1424e4" stroke="#e6f2ff" stroke-width="1.1" stroke-opacity="0.6" paint-order="stroke" lengthAdjust="spacingAndGlyphs">760E</text>
<text x="766.3" y="62.0" font-family="Liberation Sans" font-size="10.2" textLength="8.3" fill="#1424e4" stroke="#e6f2ff" stroke-width="1.1" stroke-opacity="0.6" paint-order="stroke" lengthAdjust="spacingAndGlyphs">37</text>
<text x="774.9" y="62.0" font-family="Liberation Sans" font-size="10.6" textLength="22.5" fill="#1424e4" stroke="#e6f2ff" stroke-width="1.1" stroke-opacity="0.6" paint-order="stroke" lengthAdjust="spacingAndGlyphs">90N</text>
<text x="766.3" y="114.33" font-family="Liberation Sans" font-size="10.2" textLength="8.3" fill="#1424e4" stroke="#e6f2ff" stroke-width="1.1" stroke-opacity="0.6" paint-order="stroke" lengthAdjust="spacingAndGlyphs">37</text>
<text x="774.9" y="114.33" font-family="Liberation Sans" font-size="10.6" textLength="22.5" fill="#1424e4" stroke="#e6f2ff" stroke-width="1.1" stroke-opacity="0.6" paint-order="stroke" lengthAdjust="spacingAndGlyphs">80N</text>
<text x="766.3" y="166.66000000000003" font-family="Liberation Sans" font-size="10.2" textLength="8.3" fill="#1424e4" stroke="#e6f2ff" stroke-width="1.1" stroke-opacity="0.6" paint-order="stroke" lengthAdjust="spacingAndGlyphs">37</text>
<text x="774.9" y="166.66000000000003" font-family="Liberation Sans" font-size="10.6" textLength="22.5" fill="#1424e4" stroke="#e6f2ff" stroke-width="1.1" stroke-opacity="0.6" paint-order="stroke" lengthAdjust="spacingAndGlyphs">70N</text>
<text x="766.3" y="218.99" font-family="Liberation Sans" font-size="10.2" textLength="8.3" fill="#1424e4" stroke="#e6f2ff" stroke-width="1.1" stroke-opacity="0.6" paint-order="stroke" lengthAdjust="spacingAndGlyphs">37</text>
<text x="774.9" y="218.99" font-family="Liberation Sans" font-size="10.6" textLength="22.5" fill="#1424e4" stroke="#e6f2ff" stroke-width="1.1" stroke-opacity="0.6" paint-order="stroke" lengthAdjust="spacingAndGlyphs">60N</text>
<text x="766.3" y="271.32" font-family="Liberation Sans" font-size="10.2" textLength="8.3" fill="#1424e4" stroke="#e6f2ff" stroke-width="1.1" stroke-opacity="0.6" paint-order="stroke" lengthAdjust="spacingAndGlyphs">37</text>
<text x="774.9" y="271.32" font-family="Liberation Sans" font-size="10.6" textLength="22.5" fill="#1424e4" stroke="#e6f2ff" stroke-width="1.1" stroke-opacity="0.6" paint-order="stroke" lengthAdjust="spacingAndGlyphs">50N</text>
<text x="766.3" y="323.65" font-family="Liberation Sans" font-size="10.2" textLength="8.3" fill="#1424e4" stroke="#e6f2ff" stroke-width="1.1" stroke-opacity="0.6" paint-order="stroke" lengthAdjust="spacingAndGlyphs">37</text>
<text x="774.9" y="323.65" font-family="Liberation Sans" font-size="10.6" textLength="22.5" fill="#1424e4" stroke="#e6f2ff" stroke-width="1.1" stroke-opacity="0.6" paint-order="stroke" lengthAdjust="spacingAndGlyphs">40N</text>
<text x="766.3" y="375.98" font-family="Liberation Sans" font-size="10.2" textLength="8.3" fill="#1424e4" stroke="#e6f2ff" stroke-width="1.1" stroke-opacity="0.6" paint-order="stroke" lengthAdjust="spacingAndGlyphs">37</text>
<text x="774.9" y="375.98" font-family="Liberation Sans" font-size="10.6" textLength="22.5" fill="#1424e4" stroke="#e6f2ff" stroke-width="1.1" stroke-opacity="0.6" paint-order="stroke" lengthAdjust="spacingAndGlyphs">30N</text>
<text x="766.3" y="428.31" font-family="Liberation Sans" font-size="10.2" textLength="8.3" fill="#1424e4" stroke="#e6f2ff" stroke-width="1.1" stroke-opacity="0.6" paint-order="stroke" lengthAdjust="spacingAndGlyphs">37</text>
<text x="774.9" y="428.31" font-family="Liberation Sans" font-size="10.6" textLength="22.5" fill="#1424e4" stroke="#e6f2ff" stroke-width="1.1" stroke-opacity="0.6" paint-order="stroke" lengthAdjust="spacingAndGlyphs">20N</text>
<text x="338.1" y="457.4" font-family="Liberation Sans" font-size="9.2" textLength="4.9" fill="#1424e4" stroke="#e6f2ff" stroke-width="1.1" stroke-opacity="0.6" paint-order="stroke" lengthAdjust="spacingAndGlyphs">7</text>
<text x="343.4" y="457.9" font-family="Liberation Sans" font-size="11" textLength="19.6" fill="#1424e4" stroke="#e6f2ff" stroke-width="1.1" stroke-opacity="0.6" paint-order="stroke" lengthAdjust="spacingAndGlyphs">70E</text>
<text x="443.40000000000003" y="457.4" font-family="Liberation Sans" font-size="9.2" textLength="4.9" fill="#1424e4" stroke="#e6f2ff" stroke-width="1.1" stroke-opacity="0.6" paint-order="stroke" lengthAdjust="spacingAndGlyphs">2</text>
<text x="448.7" y="457.9" font-family="Liberation Sans" font-size="11" textLength="21.3" fill="#1424e4" stroke="#e6f2ff" stroke-width="1.1" stroke-opacity="0.6" paint-order="stroke" lengthAdjust="spacingAndGlyphs">30E</text>
<text x="505.40000000000003" y="457.4" font-family="Liberation Sans" font-size="9.2" textLength="4.9" fill="#1424e4" stroke="#e6f2ff" stroke-width="1.1" stroke-opacity="0.6" paint-order="stroke" lengthAdjust="spacingAndGlyphs">2</text>
<text x="510.7" y="457.9" font-family="Liberation Sans" font-size="11" textLength="21.3" fill="#1424e4" stroke="#e6f2ff" stroke-width="1.1" stroke-opacity="0.6" paint-order="stroke" lengthAdjust="spacingAndGlyphs">40E</text>
<text x="567.9" y="457.4" font-family="Liberation Sans" font-size="9.2" textLength="4.9" fill="#1424e4" stroke="#e6f2ff" stroke-width="1.1" stroke-opacity="0.6" paint-order="stroke" lengthAdjust="spacingAndGlyphs">2</text>
<text x="573.1999999999999" y="457.9" font-family="Liberation Sans" font-size="11" textLength="21.3" fill="#1424e4" stroke="#e6f2ff" stroke-width="1.1" stroke-opacity="0.6" paint-order="stroke" lengthAdjust="spacingAndGlyphs">50E</text>
<text x="629.9" y="457.4" font-family="Liberation Sans" font-size="9.2" textLength="4.9" fill="#1424e4" stroke="#e6f2ff" stroke-width="1.1" stroke-opacity="0.6" paint-order="stroke" lengthAdjust="spacingAndGlyphs">2</text>
<text x="635.1999999999999" y="457.9" font-family="Liberation Sans" font-size="11" textLength="21.3" fill="#1424e4" stroke="#e6f2ff" stroke-width="1.1" stroke-opacity="0.6" paint-order="stroke" lengthAdjust="spacingAndGlyphs">60E</text>
<text x="692.5" y="457.4" font-family="Liberation Sans" font-size="9.2" textLength="4.9" fill="#1424e4" stroke="#e6f2ff" stroke-width="1.1" stroke-opacity="0.6" paint-order="stroke" lengthAdjust="spacingAndGlyphs">2</text>
<text x="697.8" y="457.9" font-family="Liberation Sans" font-size="11" textLength="20" fill="#1424e4" stroke="#e6f2ff" stroke-width="1.1" stroke-opacity="0.6" paint-order="stroke" lengthAdjust="spacingAndGlyphs">70E</text>
<text x="755.2" y="457.4" font-family="Liberation Sans" font-size="9.2" textLength="4.9" fill="#1424e4" stroke="#e6f2ff" stroke-width="1.1" stroke-opacity="0.6" paint-order="stroke" lengthAdjust="spacingAndGlyphs">2</text>
<text x="760.5" y="457.9" font-family="Liberation Sans" font-size="11" textLength="21.3" fill="#1424e4" stroke="#e6f2ff" stroke-width="1.1" stroke-opacity="0.6" paint-order="stroke" lengthAdjust="spacingAndGlyphs">80E</text>
<text x="389.0" y="457.9" font-family="Liberation Sans" font-size="11" textLength="18.2" fill="#1424e4" stroke="#e6f2ff" stroke-width="1.1" stroke-opacity="0.6" paint-order="stroke" lengthAdjust="spacingAndGlyphs">20E</text>
<text x="481.8" y="208.4" font-family="Liberation Sans" font-size="10.2" font-weight="bold" fill="#181818" transform="matrix(0.925,0,0,1,36.135,0)" stroke="#9ccff5" stroke-width="0.9" stroke-opacity="0.7" paint-order="stroke">DISSECTED</text>
<text x="554.8" y="276.6" font-family="Liberation Sans" font-size="10.8" textLength="13.6" fill="#1424e4" stroke="#e6f2ff" stroke-width="1.1" stroke-opacity="0.6" paint-order="stroke" lengthAdjust="spacingAndGlyphs">BB</text>
<rect x="637.5" y="148" width="6.6" height="6.6" fill="none" stroke="#15253a" stroke-width="1.1"/>
<text x="645.6" y="146.6" font-family="Liberation Sans" font-size="8.4" font-weight="bold" fill="#222" stroke="#fff" stroke-width="1.5" paint-order="stroke" textLength="19.2" lengthAdjust="spacingAndGlyphs">.סטרון</text>
<text x="425" y="349.4" font-family="Liberation Sans" font-size="8.4" font-weight="bold" fill="#111" stroke="#111" stroke-width="0.35" textLength="25" lengthAdjust="spacingAndGlyphs">.ברזיל</text>
<text x="510" y="355.8" font-family="Liberation Sans" font-size="8.4" font-weight="bold" fill="#111" stroke="#111" stroke-width="0.35" textLength="24" lengthAdjust="spacingAndGlyphs">.צרפת</text>
</g></svg>
<rect x="798.8" y="44.6" width="12" height="415" fill="#e8e8e8"/>
<rect x="798.8" y="44.6" width="0.9" height="415" fill="#8090a0"/>
<rect x="799.5" y="46" width="11" height="11.5" fill="url(#btn)" stroke="#9aa8b6" stroke-width="0.8"/>
<path d="M801.6 53.8 L805 50 L808.4 53.8Z" fill="#222"/>
<rect x="799.5" y="445.5" width="11" height="11.5" fill="url(#btn)" stroke="#9aa8b6" stroke-width="0.8"/>
<path d="M801.6 449.5 L805 453.3 L808.4 449.5Z" fill="#222"/>
<rect x="275.2" y="459.6" width="523.4" height="11.5" fill="#e8e8e8"/>
<rect x="275.2" y="459.6" width="523.4" height="0.9" fill="#8090a0"/>
<rect x="276.8" y="460.4" width="11.8" height="10.6" fill="url(#btn)" stroke="#9aa8b6" stroke-width="0.8"/>
<path d="M284.8 462.3 L280.8 465.7 L284.8 469.1Z" fill="#222"/>
<rect x="784.8" y="460.4" width="12.5" height="10.6" fill="url(#btn)" stroke="#9aa8b6" stroke-width="0.8"/>
<path d="M789.2 462.3 L793.2 465.7 L789.2 469.1Z" fill="#222"/>
<rect x="273.4" y="471" width="525.5" height="1" fill="#7f8f9f"/>
<rect x="274.2" y="52.2" width="38" height="394.8" rx="5" fill="none" stroke="#d83040" stroke-width="1.1"/>
<rect x="757.4" y="48.4" width="41.6" height="384.5" rx="5" fill="none" stroke="#d83040" stroke-width="1.1"/>
<rect x="318.6" y="439.3" width="474" height="21.5" rx="5.5" fill="none" stroke="#d83040" stroke-width="1.1"/>
<rect x="15.2" y="186.2" width="48.2" height="19" rx="6" fill="none" stroke="#d83040" stroke-width="1.1"/>
<line x1="64.8" y1="199" x2="275.5" y2="158.3" stroke="#ff0a0a" stroke-width="1" shape-rendering="crispEdges"/>
<line x1="64.8" y1="199" x2="760" y2="235.5" stroke="#ff0a0a" stroke-width="1" shape-rendering="crispEdges"/>
<line x1="64.8" y1="199" x2="690" y2="439.5" stroke="#ff0a0a" stroke-width="1" shape-rendering="crispEdges"/>
<path d="M276.6 477.8 L280 474.5 L283.5 477.8Z" fill="#5b82c6"/>
<path d="M286 474.5 L292.5 474.5 L289.2 477.8Z" fill="#5b82c6"/>
<rect x="810.2" y="40" width="0.9" height="420" fill="#98a8b8"/>
<rect x="811.1" y="40" width="3.8" height="438" fill="#fcfcfc"/>
<rect x="814.6" y="0" width="1.8" height="508" fill="#cfcfc8"/>
<rect x="816.3" y="0" width="1.7" height="507" fill="#353535"/>
<rect x="0" y="478.3" width="815" height="1.6" fill="#ffffff"/>
<rect x="275.2" y="472.2" width="523.4" height="0.9" fill="#fafafa"/>
<path d="M2.3 504.6 L2.3 482.4 L232.6 482.4" fill="none" stroke="#b4b4b4" stroke-width="0.9"/>
<path d="M2.3 504.6 L232.8 504.6 L232.8 482.4" fill="none" stroke="#6e6e6e" stroke-width="1.3"/>
<rect x="4.6" y="484.6" width="85.2" height="17.19999999999999" fill="#ffffff"/>
<path d="M4.6 501.8 L4.6 484.6 L89.8 484.6" fill="none" stroke="#5a5a5a" stroke-width="1.1"/>
<path d="M5.1 501.8 L89.8 501.8 L89.8 485.1" fill="none" stroke="#dcdcdc" stroke-width="1"/>
<rect x="90.8" y="484.6" width="91.39999999999999" height="17.19999999999999" fill="#ffffff"/>
<path d="M90.8 501.8 L90.8 484.6 L182.2 484.6" fill="none" stroke="#5a5a5a" stroke-width="1.1"/>
<path d="M91.3 501.8 L182.2 501.8 L182.2 485.1" fill="none" stroke="#dcdcdc" stroke-width="1"/>
<rect x="184.2" y="484.6" width="46.0" height="17.19999999999999" fill="#ffffff"/>
<path d="M184.2 501.8 L184.2 484.6 L230.2 484.6" fill="none" stroke="#5a5a5a" stroke-width="1.1"/>
<path d="M184.7 501.8 L230.2 501.8 L230.2 485.1" fill="none" stroke="#dcdcdc" stroke-width="1"/>
<text x="4.9" y="497.3" font-family="Liberation Mono" font-size="10.2" font-weight="bold" letter-spacing="0.18" fill="#262626" xml:space="preserve">N33°49 51.76 </text>
<text x="91.1" y="497.3" font-family="Liberation Mono" font-size="10.2" font-weight="bold" letter-spacing="0.18" fill="#262626" xml:space="preserve">E054°08 58.82 </text>
<rect x="45.4" y="491.9" width="1.1" height="2.4" fill="#222"/>
<rect x="83.2" y="491.1" width="2.4" height="3.1" fill="#777"/>
<rect x="139.2" y="491.9" width="1.1" height="2.4" fill="#222"/>
<rect x="176.2" y="491.1" width="2.4" height="3.1" fill="#777"/>
<path d="M235 503.4 L235 483 L618 483" fill="none" stroke="#9c9c9c" stroke-width="1"/>
<path d="M235.5 503.6 L618 503.6 L618 483.5" fill="none" stroke="#ffffff" stroke-width="1"/>
<rect x="270.7" y="497.1" width="62.6" height="3.3" fill="#2e2e2e"/>
<rect x="333.3" y="497.1" width="62.4" height="3.3" fill="#f8f400"/>
<rect x="395.7" y="497.1" width="62.1" height="3.3" fill="#2e2e2e"/>
<rect x="457.8" y="497.1" width="62.4" height="3.3" fill="#f8f400"/>
<rect x="520.2" y="497.1" width="62.6" height="3.3" fill="#2e2e2e"/>
<text x="407" y="495.5" font-family="Liberation Sans" font-size="9.6" fill="#333333">50,000m</text>
<rect x="620.4" y="483.2" width="63.4" height="19.4" fill="#e8e8e8" stroke="#a6a6a6" stroke-width="1"/>
<text x="621.4" y="497.1" font-family="Liberation Sans" font-size="9.6" font-weight="bold" fill="#333333">1/580,870</text>
<defs><linearGradient id="eb" x1="0" y1="0" x2="0" y2="1"><stop offset="0" stop-color="#e6edf5"/><stop offset="1" stop-color="#bcd0e6"/></linearGradient></defs>
<rect x="666.2" y="483.7" width="17.1" height="18.4" fill="url(#eb)"/>
<rect x="669.2" y="487.6" width="8" height="10.6" fill="#f8fbff" stroke="#7890b0" stroke-width="0.7"/>
<path d="M670.6 490 H675.6 M670.6 492 H675.6 M670.6 494 H674 M670.6 496 H674" stroke="#5a80c0" stroke-width="0.6"/>
<path d="M675.2 494.4 L680.6 488.2" stroke="#e0a020" stroke-width="1.8"/>
<path d="M674.6 495.2 L675.6 493.6" stroke="#333" stroke-width="1"/>
<rect x="690.9" y="485.9" width="117.8" height="15.6" fill="#e8e8e8" stroke="#8a9cb2" stroke-width="1.1"/>
<text x="750" y="497.2" text-anchor="middle" font-family="Liberation Sans" font-size="9.6" font-weight="bold" fill="#5a78b6">N/A</text>
</svg>
</body></html>
